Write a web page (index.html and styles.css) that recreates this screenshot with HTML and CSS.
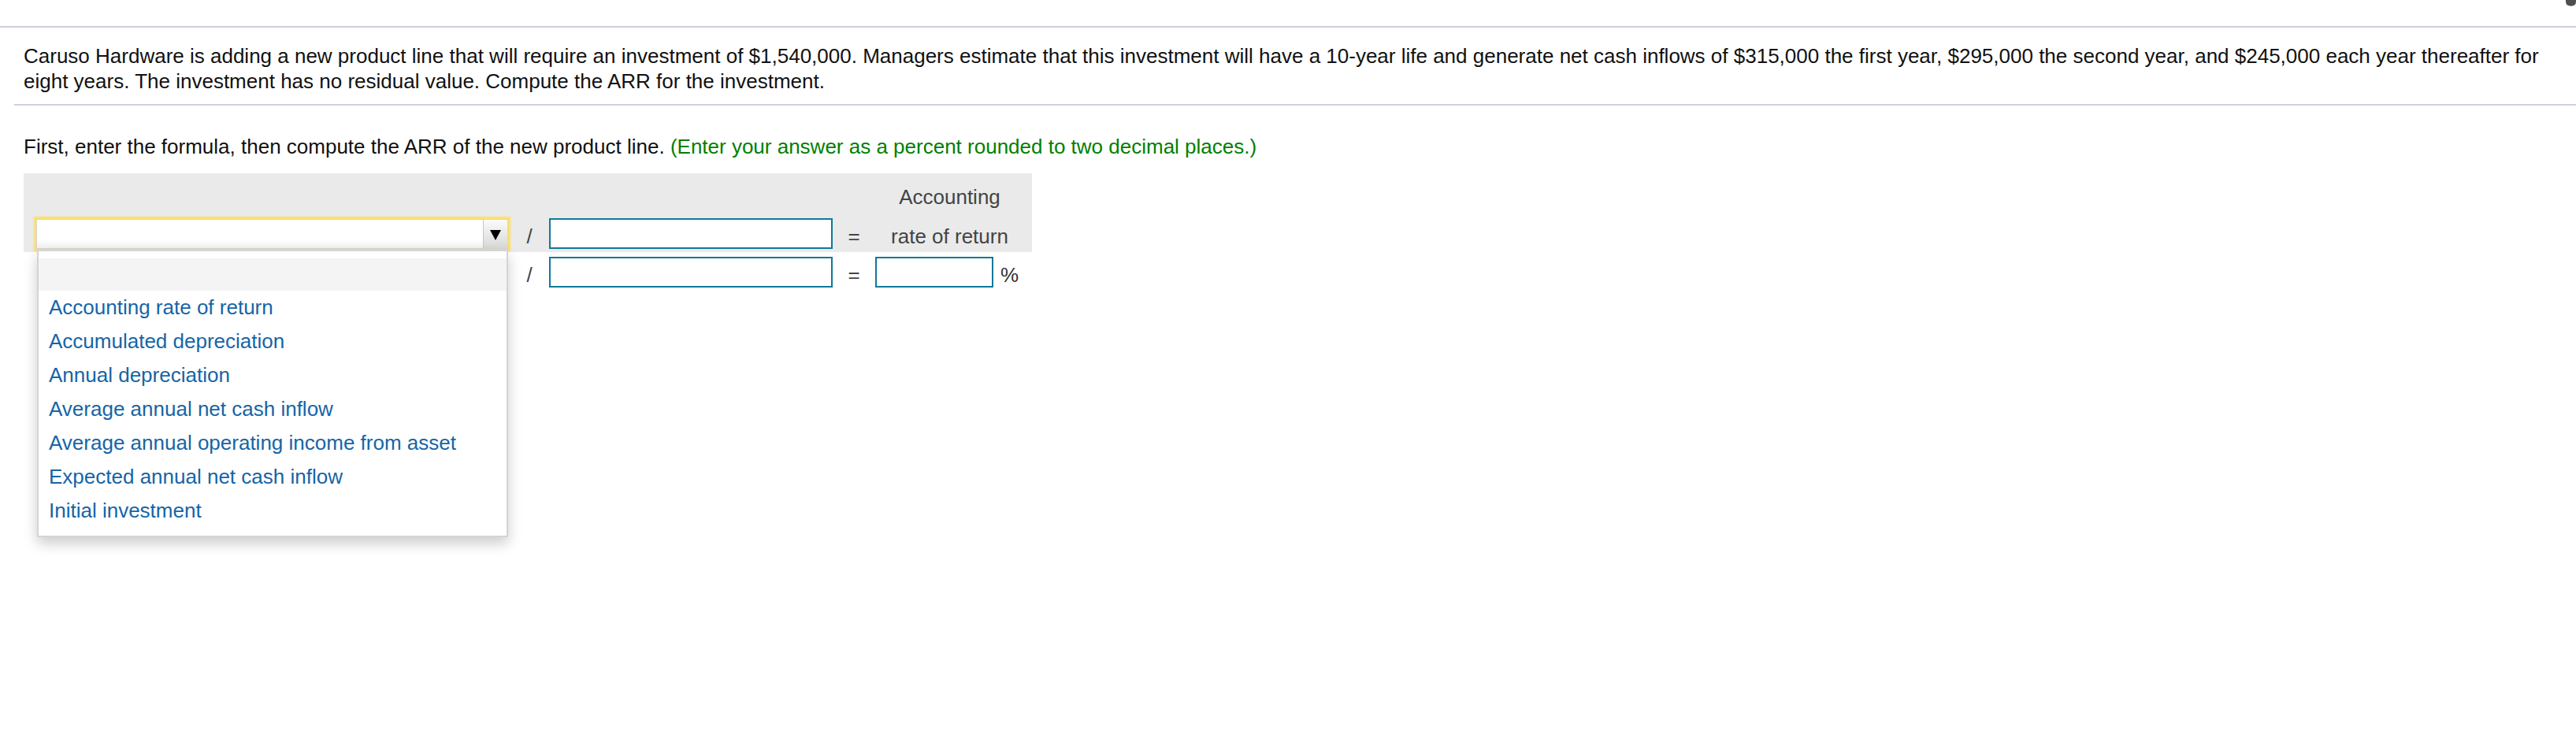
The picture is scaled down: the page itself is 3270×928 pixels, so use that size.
FILE: index.html
```html
<!DOCTYPE html>
<html lang="en">
<head>
<meta charset="utf-8">
<title>ARR</title>
<link rel="stylesheet" href="styles.css">
</head>
<body>
<div class="topbar">
  <svg class="corner-icon" width="13" height="8" viewBox="0 0 13 8"><path d="M0 0 H13 V2 Q13 7 8 7.5 Q5 8 2 6.5 Q0 5 0 2 Z" fill="#4f4f4f"/></svg>
</div>
<div class="rule"></div>
<div class="question">
  <p>Caruso Hardware is adding a new product line that will require an investment of $1,540,000. Managers estimate that this investment will have a 10-year life and generate net cash inflows of $315,000 the first year, $295,000 the second year, and $245,000 each year thereafter for eight years. The investment has no residual value. Compute the ARR for the investment.</p>
</div>
<div class="task">
  <p class="instr">First, enter the formula, then compute the ARR of the new product line. <span class="hint">(Enter your answer as a percent rounded to two decimal places.)</span></p>
  <div class="formula">
    <div class="cell shade"></div>
    <div class="cell shade"></div>
    <div class="cell shade"></div>
    <div class="cell shade"></div>
    <div class="cell shade head head-top">Accounting</div>

    <div class="cell shade sel-cell">
      <div class="select">
        <div class="sel-field"></div>
        <div class="sel-btn"><span class="tri"></span></div>
        <ul class="menu">
          <li class="blank"></li>
          <li>Accounting rate of return</li>
          <li>Accumulated depreciation</li>
          <li>Annual depreciation</li>
          <li>Average annual net cash inflow</li>
          <li>Average annual operating income from asset</li>
          <li>Expected annual net cash inflow</li>
          <li>Initial investment</li>
        </ul>
      </div>
    </div>
    <div class="cell shade op">/</div>
    <div class="cell shade inp"><input type="text" class="box wide"></div>
    <div class="cell shade op">=</div>
    <div class="cell shade head head-bot">rate of return</div>

    <div class="cell"></div>
    <div class="cell op">/</div>
    <div class="cell inp"><input type="text" class="box wide"></div>
    <div class="cell op">=</div>
    <div class="cell inp"><input type="text" class="box small"><span class="pct">%</span></div>
  </div>
</div>
</body>
</html>
```

FILE: styles.css
```css
* { box-sizing: border-box; }
html, body { margin: 0; padding: 0; background: #fff; }
body {
  width: 3270px;
  min-height: 928px;
  font-family: "Liberation Sans", Arial, Helvetica, sans-serif;
  font-size: 26px;
  color: #111;
}
.topbar {
  height: 33px;
  display: flex;
  justify-content: flex-end;
  align-items: flex-start;
}
.corner-icon { display: block; }
.rule { height: 2px; background: #cdd1dc; }
.question {
  margin-left: 18px;
  padding: 20px 30px 13px 12px;
  border-bottom: 2px solid #cdd1dc;
}
.question p { margin: 0; line-height: 32px; }
.task { padding: 36px 0 0 30px; }
.instr { margin: 0; line-height: 32px; }
.hint { color: #008000; }

.formula {
  margin-top: 18px;
  display: grid;
  grid-template-columns: 627px 30px 380px 34px 209px;
  grid-template-rows: 52px 48px 50px;
  width: 1280px;
}
.cell { display: flex; align-items: center; }
.shade { background: #eaeaea; }
.op {
  justify-content: center;
  color: #444;
  padding-top: 7px;
  line-height: 28px;
}
.head {
  justify-content: center;
  color: #444;
  line-height: 28px;
}
.head-top { align-items: flex-end; padding-bottom: 8px; }
.head-bot { padding-top: 7px; }
.inp { padding-left: 10px; }

.box {
  display: block;
  height: 39px;
  margin: 0;
  padding: 0 6px;
  border: 2px solid #10789a;
  background: #fff;
  font: inherit;
  outline: none;
}
.wide { width: 360px; }
.small { width: 150px; }
.pct { margin-left: 9px; color: #333; padding-top: 7px; line-height: 28px; }

.sel-cell { padding-left: 16px; position: relative; z-index: 5; }
.select {
  position: relative;
  display: flex;
  width: 599px;
  height: 38px;
  margin-top: 2px;
  background: linear-gradient(#ffffff 70%, #f1f1f1);
  border: 1px solid #d6d6d6;
  box-shadow: 0 0 2px 3px rgba(255, 222, 92, 0.9);
}
.sel-field { flex: 1; }
.sel-btn {
  width: 31px;
  display: flex;
  align-items: center;
  justify-content: center;
  background: linear-gradient(#fbfbfb, #d8d8d8);
  border-left: 1px solid #c6c6c6;
}
.tri {
  width: 0;
  height: 0;
  margin-top: 3px;
  border-left: 7px solid transparent;
  border-right: 7px solid transparent;
  border-top: 13px solid #000;
}
.menu {
  position: absolute;
  top: 38px;
  left: 0;
  width: 598px;
  margin: 0;
  padding: 9px 0 10px;
  list-style: none;
  background: #fff;
  border: 2px solid #d4d4d4;
  box-shadow: 0 8px 16px rgba(0, 0, 0, 0.2);
}
.menu li {
  height: 43px;
  line-height: 43px;
  padding-left: 13px;
  color: #1565a6;
  white-space: nowrap;
}
.menu li.blank { height: 41px; background: #f4f4f4; }
```
